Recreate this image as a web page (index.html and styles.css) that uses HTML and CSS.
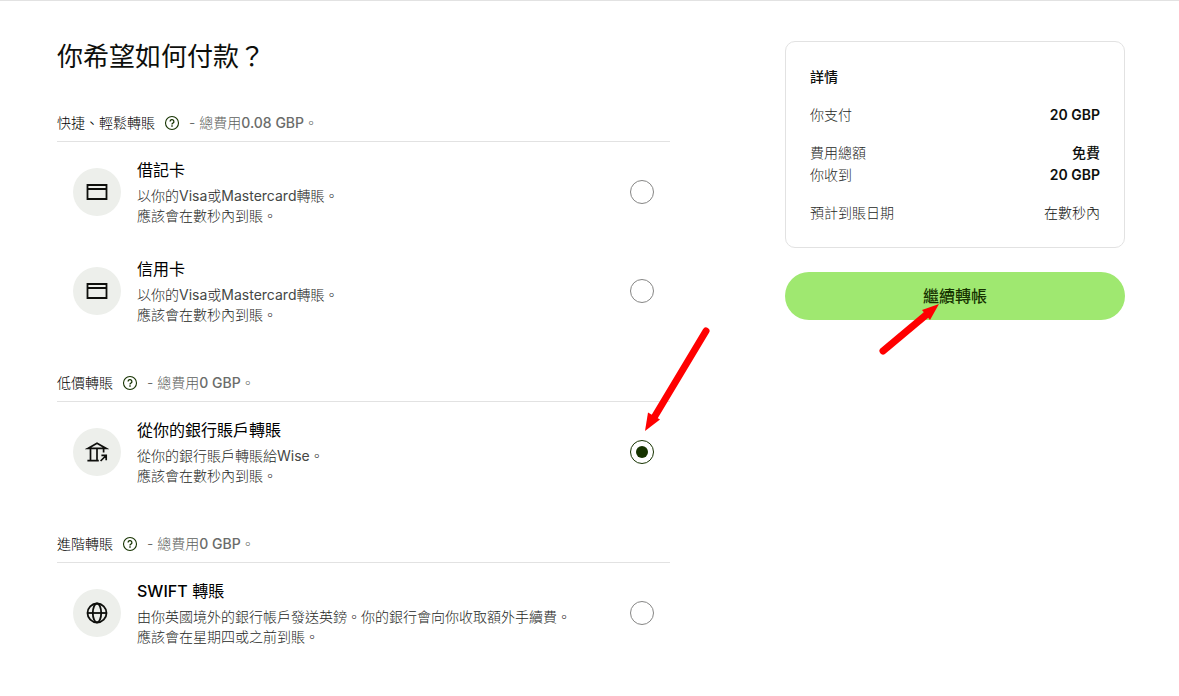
FILE: index.html
```html
<!DOCTYPE html>
<html lang="zh-Hant">
<head>
<meta charset="utf-8">
<meta name="viewport" content="width=device-width, initial-scale=1">
<title>付款方式</title>
<link rel="stylesheet" href="styles.css">
</head>
<body>
<svg class="symbols" aria-hidden="true">
  <symbol id="help" viewBox="0 0 16 16">
    <circle cx="8" cy="8" r="6.5" fill="none" stroke="currentColor" stroke-width="1.1"/>
    <path d="M6.1 6.6a1.9 1.9 0 1 1 2.8 1.6c-.6.3-.9.6-.9 1.2" fill="none" stroke="currentColor" stroke-width="1.3"/>
    <path d="M7.3 10.3h1.4v1.4H7.3z" fill="currentColor"/>
  </symbol>
  <symbol id="card" viewBox="0 0 24 24">
    <path d="M2.5 5h19v14h-19zM2 9h20" fill="none" stroke="currentColor" stroke-width="1.8"/>
  </symbol>
  <symbol id="bank" viewBox="0 0 24 24">
    <path d="M2.8 8.4 12 3.2l9.2 5.2zM5.5 9v11.4M12 9v11.4M18.6 9v3.6M2.4 20.6h11.4M15.6 21l5-5M16.4 15.4h4.8v4.8" fill="none" stroke="currentColor" stroke-width="1.7"/>
  </symbol>
  <symbol id="globe" viewBox="0 0 24 24">
    <g fill="none" stroke="currentColor" stroke-width="1.8"><circle cx="12" cy="12" r="9.5"/><ellipse cx="12" cy="12" rx="4.2" ry="9.5"/><path d="M2.4 12h19.2"/></g>
  </symbol>
</svg>
<main class="page">
  <form class="methods" id="payment">
    <h1 class="heading">你希望如何付款？</h1>

    <section class="group">
      <header class="group-header">
        <h2 class="group-title">快捷、輕鬆轉賬</h2>
        <button class="help" type="button" aria-label="說明"><svg><use href="#help"/></svg></button>
        <span class="group-fee">- 總費用<span class="amount">0.08 GBP</span>。</span>
      </header>
      <label class="option">
        <span class="badge"><svg><use href="#card"/></svg></span>
        <span class="option-text">
          <span class="option-title">借記卡</span>
          <span class="option-desc">以你的<span class="latin">Visa</span>或<span class="latin">Mastercard</span>轉賬。<br>應該會在數秒內到賬。</span>
        </span>
        <input class="radio" type="radio" name="method">
      </label>
      <label class="option">
        <span class="badge"><svg><use href="#card"/></svg></span>
        <span class="option-text">
          <span class="option-title">信用卡</span>
          <span class="option-desc">以你的<span class="latin">Visa</span>或<span class="latin">Mastercard</span>轉賬。<br>應該會在數秒內到賬。</span>
        </span>
        <input class="radio" type="radio" name="method">
      </label>
    </section>

    <section class="group">
      <header class="group-header">
        <h2 class="group-title">低價轉賬</h2>
        <button class="help" type="button" aria-label="說明"><svg><use href="#help"/></svg></button>
        <span class="group-fee">- 總費用<span class="amount">0 GBP</span>。</span>
      </header>
      <label class="option">
        <span class="badge"><svg><use href="#bank"/></svg></span>
        <span class="option-text">
          <span class="option-title">從你的銀行賬戶轉賬</span>
          <span class="option-desc">從你的銀行賬戶轉賬給<span class="latin">Wise</span>。<br>應該會在數秒內到賬。</span>
        </span>
        <span class="anchor">
          <input class="radio" type="radio" name="method" checked>
          <svg class="arrow arrow-radio" viewBox="0 0 70 110" aria-hidden="true">
            <path d="M66 7 15 92" stroke="#f00" stroke-width="7" stroke-linecap="round"/>
            <path d="M5 107 8 88.500l12 7z" fill="#f00"/>
          </svg>
        </span>
      </label>
    </section>

    <section class="group">
      <header class="group-header">
        <h2 class="group-title">進階轉賬</h2>
        <button class="help" type="button" aria-label="說明"><svg><use href="#help"/></svg></button>
        <span class="group-fee">- 總費用<span class="amount">0 GBP</span>。</span>
      </header>
      <label class="option">
        <span class="badge"><svg><use href="#globe"/></svg></span>
        <span class="option-text">
          <span class="option-title"><span class="swift">SWIFT</span> 轉賬</span>
          <span class="option-desc">由你英國境外的銀行帳戶發送英鎊。你的銀行會向你收取額外手續費。<br>應該會在星期四或之前到賬。</span>
        </span>
        <input class="radio" type="radio" name="method">
      </label>
    </section>
  </form>

  <aside class="summary">
    <section class="details">
      <h2 class="details-title">詳情</h2>
      <dl class="rows">
        <div class="row"><dt>你支付</dt><dd class="strong">20 GBP</dd></div>
      </dl>
      <dl class="rows">
        <div class="row"><dt>費用總額</dt><dd class="free">免費</dd></div>
        <div class="row"><dt>你收到</dt><dd class="strong">20 GBP</dd></div>
      </dl>
      <dl class="rows">
        <div class="row"><dt>預計到賬日期</dt><dd>在數秒內</dd></div>
      </dl>
    </section>
    <div class="anchor">
      <button class="submit" type="submit" form="payment">繼續轉帳</button>
      <svg class="arrow arrow-submit" viewBox="0 0 66 56" aria-hidden="true">
        <path d="M6 50 49 14" stroke="#f00" stroke-width="7" stroke-linecap="round"/>
        <path d="M62 3 45 9l8 10z" fill="#f00"/>
      </svg>
    </div>
  </aside>
</main>
</body>
</html>
```
FILE: styles.css
```css
* {
  box-sizing: border-box;
}

body {
  margin: 0;
  border-top: 1px solid #e2e2e2;
  background: #fff;
  color: #0e0f0c;
  font: 300 14px/22px Inter, "Noto Sans CJK TC", sans-serif;
}

h1, h2, dl, dd {
  margin: 0;
}

.symbols {
  display: none;
}

.page {
  display: grid;
  grid-template-columns: minmax(0, 1fr) 340px;
  gap: 115px;
  padding: 40px 54px 40px 57px;
}

.heading {
  margin-bottom: 39px;
  font-size: 26px;
  line-height: 32px;
  font-weight: 400;
}

.group + .group {
  margin-top: 32px;
}

.group-header {
  display: flex;
  align-items: center;
  gap: 9px;
  padding-bottom: 7px;
  border-bottom: 1px solid #e2e2e2;
}

.group-title {
  color: #000;
  font-size: 14px;
  font-weight: 300;
}

.group-fee {
  color: #5d5f5d;
}

.amount {
  color: #6a6c6a;
  font-weight: 500;
}

.swift {
  font-weight: 500;
}

.latin {
  color: #454745;
  font-weight: 400;
}

.help {
  display: flex;
  padding: 0;
  border: 0;
  background: none;
  color: #163300;
}

.help svg {
  width: 16px;
  height: 16px;
}

.option {
  display: flex;
  align-items: center;
  gap: 16px;
  padding: 16px 16px 15px;
}

.badge {
  display: flex;
  flex: none;
  align-items: center;
  justify-content: center;
  width: 48px;
  height: 48px;
  border-radius: 50%;
  background: #edefeb;
}

.badge svg {
  width: 24px;
  height: 24px;
}

.option-text {
  display: flex;
  flex: 1;
  flex-direction: column;
  gap: 4px;
}

.option-title {
  color: #000;
  font-size: 16px;
  line-height: 24px;
  font-weight: 400;
}

.option-desc {
  color: #252725;
  line-height: 20px;
}

.radio {
  display: grid;
  flex: none;
  place-items: center;
  width: 24px;
  height: 24px;
  margin: 0;
  appearance: none;
  border: 1px solid #868685;
  border-radius: 50%;
  background: #fff;
}

.radio:checked {
  border-color: #163300;
}

.radio:checked::before {
  width: 12px;
  height: 12px;
  border-radius: 50%;
  background: #163300;
  content: "";
}

.anchor {
  position: relative;
}

.arrow {
  position: absolute;
  fill: none;
  pointer-events: none;
}

.arrow-radio {
  left: 10px;
  top: -116px;
  width: 70px;
  height: 110px;
}

.arrow-submit {
  left: 92px;
  top: 29px;
  width: 66px;
  height: 56px;
}

.details {
  display: flex;
  flex-direction: column;
  gap: 16px;
  margin-bottom: 24px;
  padding: 24px 24px 23px;
  border: 1px solid #e2e2e2;
  border-radius: 10px;
}

.details-title {
  font-size: 14px;
  font-weight: 500;
}

.row {
  display: flex;
  justify-content: space-between;
}

.row dt {
  color: #252725;
}

.strong {
  font-weight: 600;
}

.free {
  font-weight: 500;
}

.submit {
  width: 100%;
  height: 48px;
  border: 0;
  border-radius: 24px;
  background: #9fe870;
  color: #163300;
  font: inherit;
  font-size: 16px;
  font-weight: 500;
}
```
